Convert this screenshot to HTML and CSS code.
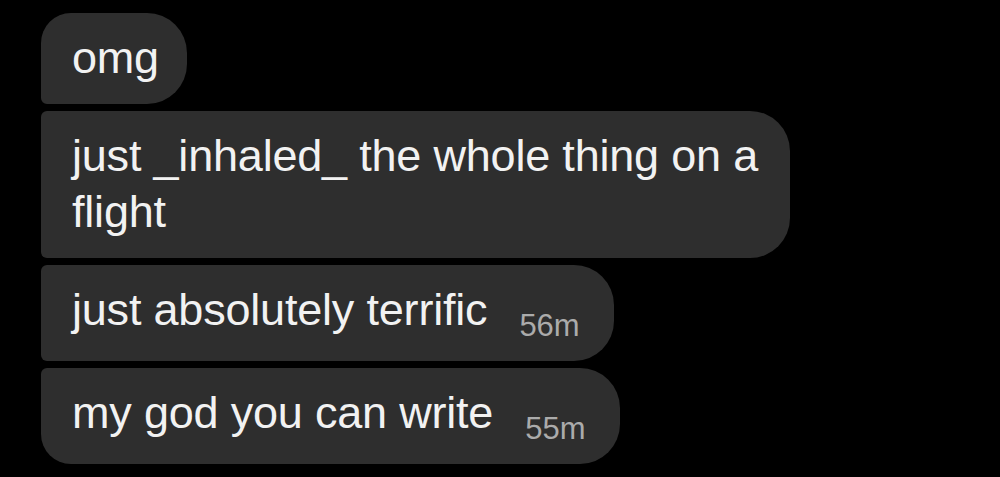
FILE: index.html
```html
<!DOCTYPE html>
<html lang="en">
<head>
<meta charset="utf-8">
<title>Messages</title>
<link rel="stylesheet" href="styles.css">
</head>
<body>
<div class="thread">
  <div class="bubble first">omg</div>
  <div class="bubble">just _inhaled_ the whole thing on a flight</div>
  <div class="bubble timed">just absolutely terrific<span class="time">56m</span></div>
  <div class="bubble timed last">my god you can write<span class="time">55m</span></div>
</div>
</body>
</html>
```

FILE: styles.css
```css
html, body {
  margin: 0;
  background: #000;
}

body {
  width: 1000px;
  height: 477px;
  overflow: hidden;
}

.thread {
  display: flex;
  flex-direction: column;
  align-items: flex-start;
  gap: 7px;
  padding: 13px 0 0 41px;
}

.bubble {
  box-sizing: border-box;
  max-width: 749px;
  background: #2e2e2e;
  color: #f2f2f2;
  font-family: "Liberation Sans", Arial, sans-serif;
  font-size: 45px;
  line-height: 56px;
  letter-spacing: -0.2px;
  padding: 17px 28px 18px 31px;
  border-radius: 6px 40px 40px 6px;
}

.bubble.timed {
  padding-right: 34px;
  padding-bottom: 20px;
}

.bubble.first {
  border-top-left-radius: 30px;
}

.bubble.last {
  border-bottom-left-radius: 30px;
}

.time {
  margin-left: 32px;
  font-size: 31px;
  line-height: 1;
  letter-spacing: 0;
  color: #ababab;
  vertical-align: -11px;
}
```
